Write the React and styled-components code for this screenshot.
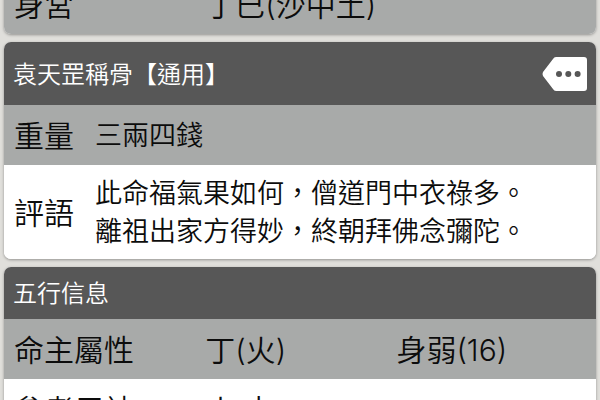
import React from "react";
import styled, { createGlobalStyle } from "styled-components";

const GlobalStyle = createGlobalStyle`
    body {
        margin: 0;
        background-color: #e0dfdb;
        font-family: "Inter", "Noto Sans CJK TC", sans-serif;
        font-weight: 350;
        color: #0c0c0c;
    }
`;

const Viewport = styled.main`
    height: 100vh;
    overflow: hidden;
`;

const List = styled.div`
    display: flex;
    flex-direction: column;
    gap: 8px;
    padding: 0 4px;
    margin-top: -26px;
`;

const Card = styled.section`
    border-radius: 7px;
    background-color: white;
    box-shadow: 0 1px 3px rgba(0, 0, 0, 0.35);
    overflow: hidden;
`;

const CardHeader = styled.header`
    display: flex;
    align-items: center;
    justify-content: space-between;
    box-sizing: border-box;
    min-height: ${props => (props.$tall ? "63px" : "52px")};
    padding: 0 8px 0 9px;
    background-color: #575757;
    color: white;
`;

const Title = styled.h2`
    margin: 0;
    padding-top: 2px;
    font-size: 24px;
    font-weight: 350;
    line-height: 32px;
`;

const MoreButton = styled.button`
    display: flex;
    padding: 0;
    border: none;
    background: none;
    color: white;
    cursor: pointer;
`;

const Table = styled.table`
    width: 100%;
    border-collapse: collapse;
    table-layout: fixed;
`;

const Row = styled.tr`
    height: 60px;
    background-color: ${props => (props.$shaded ? "#a8aaa9" : "white")};
`;

const Label = styled.th`
    width: ${props => (props.$narrow ? "81px" : "32.3%")};
    box-sizing: border-box;
    padding: 2px 0 0 10px;
    font-size: 30px;
    font-weight: 350;
    line-height: 40px;
    text-align: left;
    white-space: nowrap;
`;

const Value = styled.td`
    width: ${props => (props.$last ? "auto" : "32.3%")};
    box-sizing: border-box;
    padding: 2px 0 0 10px;
    font-size: 30px;
    line-height: 40px;
    white-space: nowrap;
`;

const Comment = styled.td`
    padding: ${props => (props.$long ? "10px 0 8px 10px" : "2px 0 0 10px")};
    font-size: 27px;
    line-height: 38px;
`;

const Line = styled.div``;

function MoreIcon() {
    return (
        <svg width="46" height="36" viewBox="0 0 46 36" aria-hidden="true">
            <path
                d="M14 1H42Q45 1 45 4V32Q45 35 42 35H14Q12 35 11 33L1 20Q0 18 1 16L11 3Q12 1 14 1Z"
                fill="currentColor"
            />
            <circle cx="17" cy="18" r="3" fill="#575757" />
            <circle cx="26.3" cy="18" r="3" fill="#575757" />
            <circle cx="35.6" cy="18" r="3" fill="#575757" />
        </svg>
    );
}

const elements = [
    { label: "命主屬性", values: ["丁(火)", "身弱(16)"] },
    { label: "參考用神", values: ["火,木", ""] },
];

const verse = ["此命福氣果如何，僧道門中衣祿多。", "離祖出家方得妙，終朝拜佛念彌陀。"];

export default function App() {
    return (
        <Viewport lang="zh-Hant">
            <GlobalStyle />
            <List>
                <Card>
                    <Table>
                        <tbody>
                            <Row $shaded>
                                <Label scope="row">身宮</Label>
                                <Value $last>丁巳(沙中土)</Value>
                            </Row>
                        </tbody>
                    </Table>
                </Card>

                <Card>
                    <CardHeader $tall>
                        <Title>袁天罡稱骨【通用】</Title>
                        <MoreButton type="button" aria-label="更多">
                            <MoreIcon />
                        </MoreButton>
                    </CardHeader>
                    <Table>
                        <tbody>
                            <Row $shaded>
                                <Label scope="row" $narrow>重量</Label>
                                <Comment>三兩四錢</Comment>
                            </Row>
                            <Row>
                                <Label scope="row" $narrow>評語</Label>
                                <Comment $long>
                                    {verse.map((line, i) => (
                                        <Line key={i}>{line}</Line>
                                    ))}
                                </Comment>
                            </Row>
                        </tbody>
                    </Table>
                </Card>

                <Card>
                    <CardHeader>
                        <Title>五行信息</Title>
                    </CardHeader>
                    <Table>
                        <tbody>
                            {elements.map((item, i) => (
                                <Row key={item.label} $shaded={i % 2 === 0}>
                                    <Label scope="row">{item.label}</Label>
                                    {item.values.map((value, j) => (
                                        <Value key={j} $last={j === item.values.length - 1}>{value}</Value>
                                    ))}
                                </Row>
                            ))}
                        </tbody>
                    </Table>
                </Card>
            </List>
        </Viewport>
    );
}
